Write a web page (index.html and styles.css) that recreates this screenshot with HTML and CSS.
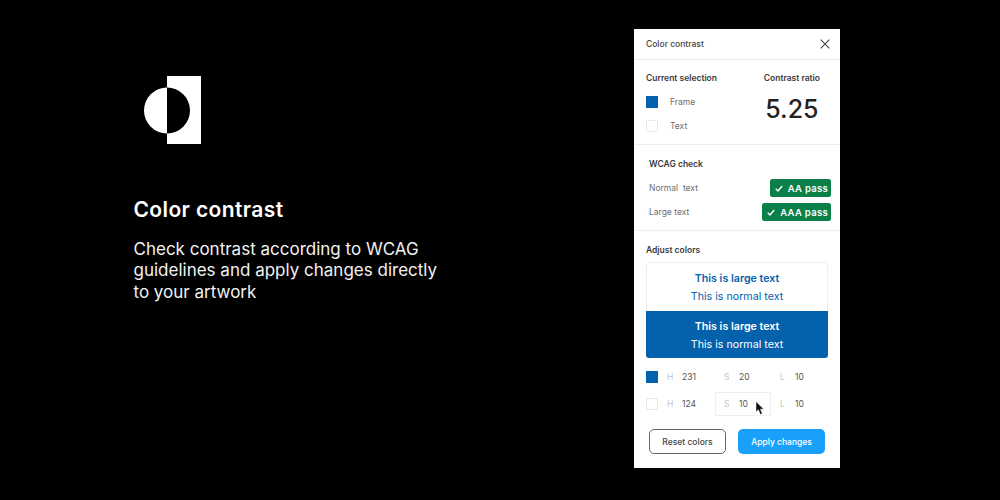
FILE: index.html
```html
<!DOCTYPE html>
<html lang="en">
<head>
<meta charset="utf-8">
<title>Color contrast</title>
<link rel="stylesheet" href="styles.css">
</head>
<body>
<main class="stage">
  <section class="intro">
    <svg class="logo" width="57" height="68" viewBox="0 0 57 68" aria-hidden="true">
      <path fill="#fff" d="M23 0H57V68H23V57.500A23 23 0 0 0 23 11.500Z"/>
      <path fill="#fff" d="M23 11.500A23 23 0 0 0 23 57.500Z"/>
    </svg>
    <h1 class="title">Color contrast</h1>
    <p class="lead">Check contrast according to WCAG guidelines and apply changes directly to your artwork</p>
  </section>
  <aside class="panel">
    <header class="panel-head">
      <span class="panel-title">Color contrast</span>
      <svg class="close" width="10" height="10" viewBox="0 0 10 10" aria-hidden="true"><path d="M.7.700l8.600 8.600M9.300.700L.7 9.300" stroke="#444" stroke-width="1.100" fill="none"/></svg>
    </header>
    <section class="selection">
      <div class="sel-col">
        <h2 class="label">Current selection</h2>
        <div class="sel-row"><span class="swatch blue"></span><span class="muted">Frame</span></div>
        <div class="sel-row"><span class="swatch white"></span><span class="muted">Text</span></div>
      </div>
      <div class="ratio-col">
        <h2 class="label">Contrast ratio</h2>
        <div class="ratio">5.25</div>
      </div>
    </section>
    <section class="wcag">
      <h2 class="label">WCAG check</h2>
      <div class="check-row"><span class="muted">Normal&nbsp; text</span><span class="badge"><svg width="8" height="7" viewBox="0 0 8 7" aria-hidden="true"><path d="M.8 3.700l2.200 2.200L7.200 1" stroke="#fff" stroke-width="1.400" fill="none"/></svg>AA pass</span></div>
      <div class="check-row"><span class="muted">Large text</span><span class="badge"><svg width="8" height="7" viewBox="0 0 8 7" aria-hidden="true"><path d="M.8 3.700l2.200 2.200L7.200 1" stroke="#fff" stroke-width="1.400" fill="none"/></svg>AAA pass</span></div>
    </section>
    <section class="adjust">
      <h2 class="label">Adjust colors</h2>
      <div class="preview">
        <div class="pv pv-light"><strong>This is large text</strong><span>This is normal text</span></div>
        <div class="pv pv-dark"><strong>This is large text</strong><span>This is normal text</span></div>
      </div>
      <div class="hsl-row">
        <span class="swatch blue"></span>
        <div class="hsl"><i>H</i><b>231</b></div>
        <div class="hsl"><i>S</i><b>20</b></div>
        <div class="hsl"><i>L</i><b>10</b></div>
      </div>
      <div class="hsl-row">
        <span class="swatch white"></span>
        <div class="hsl"><i>H</i><b>124</b></div>
        <div class="hsl active"><i>S</i><b>10</b>
          <svg class="cursor" width="10" height="15" viewBox="0 0 10 15" aria-hidden="true"><path d="M1 0.500V11L3.400 8.800L5.300 13.500L7.300 12.600L5.400 8.200H8.800Z" fill="#111" stroke="#fff" stroke-width=".5"/></svg>
        </div>
        <div class="hsl"><i>L</i><b>10</b></div>
      </div>
      <div class="actions">
        <span class="btn btn-ghost">Reset colors</span>
        <span class="btn btn-primary">Apply changes</span>
      </div>
    </section>
  </aside>
</main>
</body>
</html>
```
FILE: styles.css
```css
* { box-sizing: border-box; }
html, body { margin: 0; height: 100%; }
body { background: #000; font-family: Inter, "Liberation Sans", sans-serif; color: #333; overflow: hidden; }
.stage { width: 1000px; height: 500px; display: flex; padding: 29px 160px 32px 133.500px; justify-content: space-between; }
.intro { width: 310px; padding-top: 47px; color: #fff; }
.logo { display: block; margin-left: 10.500px; }
.title { margin: 54px 0 0; font-size: 21px; line-height: 24px; font-weight: 600; letter-spacing: .38px; }
.lead { margin: 17px 0 0; font-size: 17px; line-height: 21.300px; font-weight: 400; color: #f2f2f2; }
.panel { width: 206px; height: 439px; background: #fff; display: flex; flex-direction: column; }
.panel-head { height: 31px; padding: 0 10px 0 12px; display: flex; align-items: center; justify-content: space-between; border-bottom: 1px solid #eee; flex: none; margin: 0; }
.panel-title { font-size: 8.500px; font-weight: 500; color: #444; }
.label { margin: 0; font-size: 8.500px; line-height: 12px; font-weight: 600; color: #3a3a3a; }
.muted { font-size: 8.500px; color: #6e6e6e; }
.selection { height: 85px; padding: 12px 20px 0 12px; display: flex; justify-content: space-between; border-bottom: 1px solid #eee; flex: none; }
.sel-col { display: flex; flex-direction: column; }
.sel-row { display: flex; align-items: center; gap: 12px; height: 12px; margin-top: 12px; }
.swatch { width: 12px; height: 12px; flex: none; display: block; }
.swatch.blue { background: #0461ac; }
.swatch.white { background: #fff; border: 1px solid #eaeaea; }
.ratio-col { display: flex; flex-direction: column; align-items: center; }
.ratio { margin-top: 10px; font-size: 25px; line-height: 30px; font-weight: 500; color: #222; }
.wcag { height: 86px; padding: 12.500px 9px 0 15px; border-bottom: 1px solid #eee; flex: none; }
.check-row { height: 18px; margin-top: 6px; display: flex; align-items: center; justify-content: space-between; }
.check-row:first-of-type { margin-top: 9.500px; }
.badge { height: 18px; padding: 0 3px 0 5px; display: inline-flex; align-items: center; gap: 5px; background: #0a8048; color: #fff; border-radius: 2.500px; font-size: 9.500px; font-weight: 600; letter-spacing: .3px; }
.adjust { flex: 1; padding: 13px 12px 0; display: flex; flex-direction: column; }
.preview { margin-top: 6px; width: 182px; border-radius: 3px; overflow: hidden; flex: none; }
.pv { display: flex; flex-direction: column; align-items: center; justify-content: center; gap: 5px; font-size: 10.700px; line-height: 13px; }
.pv strong { font-weight: 600; }
.pv-light { height: 49px; color: #0461ac; border: 1px solid #efefef; border-bottom: 0; border-radius: 3px 3px 0 0; }
.pv-dark { height: 47px; padding-top: 1px; color: #fff; background: #0461ac; }
.hsl-row { display: grid; grid-template-columns: 12px 57px 56px 58px; align-items: center; height: 24px; margin-top: 3px; flex: none; }
.preview + .hsl-row { margin-top: 7px; }
.hsl { display: flex; align-items: center; height: 24px; padding-left: 9px; font-size: 8.500px; position: relative; }
.hsl i { font-style: normal; color: #c4c4c4; width: 15px; }
.hsl b { font-weight: 400; color: #555; }
.hsl.active { border: 1px solid #eee; padding-left: 8px; }
.cursor { position: absolute; left: 39px; top: 8px; }
.actions { display: flex; justify-content: space-between; margin-top: 13px; padding: 0 3px; }
.btn { height: 25px; border-radius: 5px; display: flex; align-items: center; justify-content: center; font-size: 8.500px; font-weight: 500; }
.btn-ghost { width: 77px; border: 1px solid #666; color: #444; }
.btn-primary { width: 87px; background: #18a0fb; color: #fff; }
```
